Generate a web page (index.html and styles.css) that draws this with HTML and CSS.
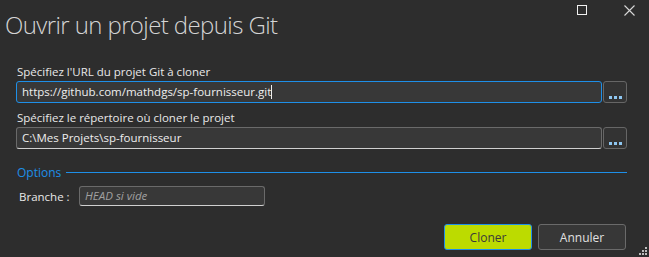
FILE: index.html
```html
<!DOCTYPE html>
<html lang="fr">
<head>
    <meta charset="UTF-8">
    <title>Ouvrir un projet depuis Git</title>
    <link rel="stylesheet" href="styles.css">
</head>
<body>
    <div class="window">
        <div class="title-bar">
            <h1 class="title">Ouvrir un projet depuis Git</h1>
            <div class="window-buttons">
                <span class="btn-max"></span>
                <svg class="btn-close" width="11" height="11" viewBox="0 0 11 11">
                    <path d="M0.5 0.5 L10.5 10.5 M10.5 0.5 L0.5 10.5" stroke="#d8d8d8" stroke-width="1.1" fill="none"/>
                </svg>
            </div>
        </div>

        <div class="form">
            <label class="field-label">Spécifiez l'URL du projet Git à cloner</label>
            <div class="field-row">
                <div class="text-input focused">https://github.com/mathdgs/sp-fournisseur.git<span class="caret"></span></div>
                <button class="browse"><span></span><span></span><span></span></button>
            </div>

            <label class="field-label">Spécifiez le répertoire où cloner le projet</label>
            <div class="field-row">
                <div class="text-input">C:\Mes Projets\sp-fournisseur</div>
                <button class="browse"><span></span><span></span><span></span></button>
            </div>

            <div class="group-header">
                <span class="group-title">Options</span>
                <span class="group-line"></span>
            </div>

            <div class="branch-row">
                <span class="branch-label">Branche :</span>
                <div class="text-input small placeholder">HEAD si vide</div>
            </div>
        </div>

        <div class="footer">
            <button class="action primary">Cloner</button>
            <button class="action">Annuler</button>
        </div>

        <svg class="grip" width="9" height="9" viewBox="0 0 9 9">
            <rect x="7" y="1" width="2" height="2" fill="#bbb"/>
            <rect x="4" y="4" width="2" height="2" fill="#bbb"/>
            <rect x="7" y="4" width="2" height="2" fill="#bbb"/>
            <rect x="1" y="7" width="2" height="2" fill="#bbb"/>
            <rect x="4" y="7" width="2" height="2" fill="#bbb"/>
            <rect x="7" y="7" width="2" height="2" fill="#bbb"/>
        </svg>
    </div>
</body>
</html>
```

FILE: styles.css
```css
body {
    margin: 0;
    background: #2d2d2d;
    font-family: "Open Sans", "Noto Sans", sans-serif;
    color: #e6e6e6;
}

.window {
    position: relative;
    width: 649px;
    height: 257px;
    overflow: hidden;
}

.title-bar {
    display: flex;
    justify-content: space-between;
    align-items: flex-start;
    height: 55px;
}

.title {
    margin: 8px 0 0 5px;
    font-size: 24px;
    font-weight: 300;
    letter-spacing: -0.6px;
    line-height: 34px;
    color: #d4d4d4;
}

.window-buttons {
    display: flex;
    align-items: flex-start;
    gap: 37px;
    padding: 5px 14px 0 0;
}

.btn-max {
    width: 8px;
    height: 8px;
    border: 1px solid #f0f0f0;
}

.btn-close {
    display: block;
}

.form {
    padding: 9px 22px 0 16px;
}

.field-label {
    display: block;
    font-size: 11.5px;
    line-height: 16px;
    margin: 0 0 1px 1px;
    color: #e8e8e8;
}

.field-row {
    display: flex;
    gap: 1px;
    margin-bottom: 7px;
}

.text-input {
    flex: 1;
    height: 22px;
    box-sizing: border-box;
    background: #383838;
    border: 1px solid #6a6a6a;
    border-bottom-color: #d0d0d0;
    border-radius: 3px;
    padding: 0 5px;
    font-size: 11.5px;
    line-height: 20px;
    color: #eeeeee;
    white-space: nowrap;
}

.text-input.focused {
    border-color: #1e8fe8;
}

.caret {
    display: inline-block;
    width: 1px;
    height: 14px;
    background: #eeeeee;
    vertical-align: -3px;
}

.browse {
    width: 24px;
    height: 22px;
    box-sizing: border-box;
    background: #333333;
    border: 1px solid #666666;
    border-radius: 3px;
    padding: 0 0 3px;
    display: flex;
    align-items: flex-end;
    justify-content: center;
    gap: 2px;
}

.browse span {
    width: 3px;
    height: 3px;
    background: #8ec6f0;
}

.group-header {
    display: flex;
    align-items: center;
    margin-top: 15px;
    height: 16px;
}

.group-title {
    font-size: 12px;
    color: #1e8fe8;
    margin-left: 1px;
    margin-right: 5px;
}

.group-line {
    flex: 1;
    height: 1px;
    background: #1e8fe8;
    margin-top: 1px;
}

.branch-row {
    display: flex;
    align-items: center;
    margin-top: 6px;
}

.branch-label {
    width: 60px;
    padding-left: 3px;
    font-size: 11.5px;
    color: #e8e8e8;
}

.text-input.small {
    flex: none;
    width: 186px;
    height: 20px;
    line-height: 18px;
}

.placeholder {
    font-style: italic;
    color: #a0a0a0;
}

.footer {
    display: flex;
    justify-content: flex-end;
    gap: 6px;
    padding: 18px 23px 0 0;
}

.action {
    width: 88px;
    height: 26px;
    box-sizing: border-box;
    background: #373737;
    border: 1px solid #6a6a6a;
    border-radius: 3px;
    font-family: "Open Sans", "Noto Sans", sans-serif;
    font-size: 12px;
    color: #e0e0e0;
}

.action.primary {
    background: #bcdb00;
    border-color: #1e8fe8;
    color: #3a3a3a;
}

.grip {
    position: absolute;
    right: 2px;
    bottom: 2px;
}
```
